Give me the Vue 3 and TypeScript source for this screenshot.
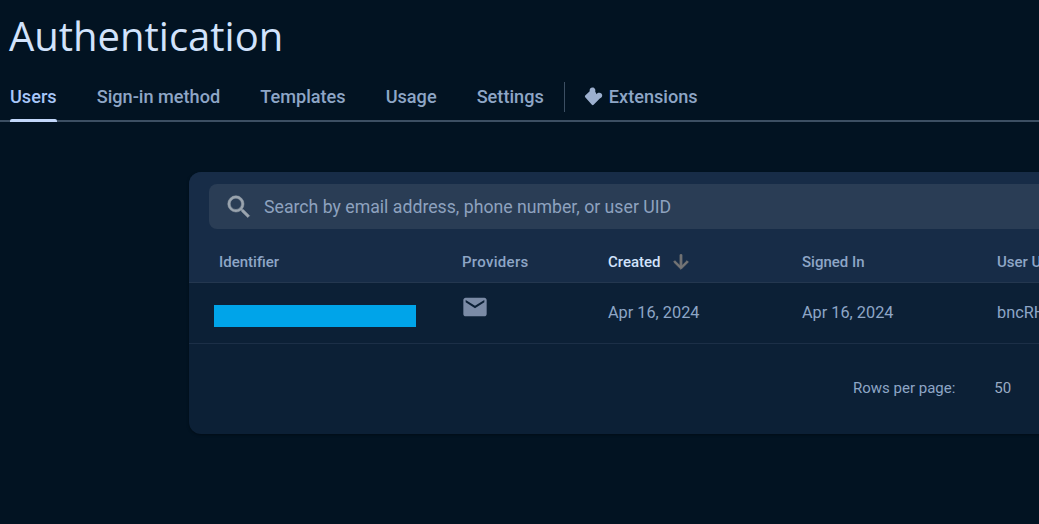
<script setup lang="ts">
const tabs: string[] = ['Users', 'Sign-in method', 'Templates', 'Usage', 'Settings']
</script>

<template>
  <div class="page">
    <h1 class="title">Authentication</h1>
    <nav class="tabs">
      <a v-for="(t, i) in tabs" :key="t" class="tab" :class="{ active: i === 0 }">{{ t }}</a>
      <span class="divider"></span>
      <a class="tab ext">
        <svg class="puzzle" width="20" height="20" viewBox="0 0 20 20">
          <path fill="#9db0cf" d="M1.200 9.600 5.700 5.200C5.200 3 6.600 1.400 8.500 1.400S11.900 3.200 11.200 5.400L12.600 8.200C13.600 6.600 16 6.300 17.400 7.600 18.900 9.200 18.400 11.800 15.800 12.600L9.600 18.800C9 19.300 8.400 19.300 7.900 18.800L1.200 11.300C.7 10.700.7 10.100 1.200 9.600Z"/>
        </svg>
        Extensions
      </a>
    </nav>

    <section class="card">
      <div class="card-head">
        <div class="search">
          <svg class="search-icon" width="30" height="30" viewBox="0 0 24 24">
            <path fill="#9aa4ae" stroke="#9aa4ae" stroke-width="0.4" d="M15.500 14h-.79l-.28-.27A6.470 6.470 0 0 0 16 9.500 6.500 6.500 0 1 0 9.500 16c1.610 0 3.090-.59 4.230-1.570l.27.28v.79l5 4.990L20.490 19l-4.990-5Zm-6 0C7.010 14 5 11.990 5 9.500S7.010 5 9.500 5 14 7.010 14 9.500 11.990 14 9.500 14Z"/>
          </svg>
          <span class="placeholder">Search by email address, phone number, or user UID</span>
        </div>
        <div class="grid head-row">
          <span>Identifier</span>
          <span class="providers">Providers</span>
          <span class="sorted">Created
            <svg class="arrow" width="22" height="22" viewBox="0 0 24 24">
              <path fill="#757575" stroke="#757575" stroke-width="1" d="M20 12l-1.410-1.410L13 16.170V4h-2v12.170l-5.580-5.590L4 12l8 8 8-8Z"/>
            </svg>
          </span>
          <span>Signed In</span>
          <span>User UID</span>
        </div>
      </div>

      <div class="grid body-row">
        <span class="redacted"></span>
        <svg class="mail" width="28" height="28" viewBox="0 0 24 24">
          <path fill="#7b8ba6" d="M20 4H4c-1.100 0-2 .9-2 2v12c0 1.100.9 2 2 2h16c1.100 0 2-.9 2-2V6c0-1.100-.9-2-2-2Zm0 4-8 5-8-5V6l8 5 8-5v2Z"/>
        </svg>
        <span class="cell">Apr 16, 2024</span>
        <span class="cell">Apr 16, 2024</span>
        <span class="cell">bncRHxQ2pLk8vTz</span>
      </div>

      <div class="pager">
        <span class="rows-label">Rows per page:</span>
        <span class="rows-value">50</span>
      </div>
    </section>
  </div>
</template>

<style>
html, body {
  margin: 0;
  background: #021322;
  overflow: hidden;
}
</style>

<style scoped>
.page {
  width: 1039px;
  height: 524px;
  overflow: hidden;
  background: #021322;
  font-family: Roboto, "Liberation Sans", sans-serif;
}
.title {
  margin: 0;
  padding: 11px 0 0 9px;
  height: 59px;
  box-sizing: content-box;
  font-family: "Open Sans", sans-serif;
  font-weight: 450;
  font-size: 40px;
  line-height: 50px;
  color: #d2e3fc;
}
.tabs {
  display: flex;
  align-items: stretch;
  gap: 40px;
  height: 52px;
  padding-left: 10px;
  border-bottom: 2px solid #3c4f63;
  box-sizing: border-box;
}
.tab {
  position: relative;
  display: flex;
  align-items: center;
  padding-top: 2px;
  font-size: 18.15px;
  font-weight: 500;
  color: #8ea6c6;
}
.tab.active {
  color: #a8c7fa;
}
.tab.active::after {
  content: "";
  position: absolute;
  left: 0;
  right: 0;
  bottom: -2px;
  height: 3px;
  border-radius: 2px 2px 0 0;
  background: #c2d7fa;
}
.divider {
  width: 1px;
  height: 30px;
  margin: 12px -20px 0 -20px;
  background: #3c4f63;
}
.ext {
  gap: 5px;
}
.puzzle {
  flex: none;
  margin-left: -1px;
}
.card {
  width: 1000px;
  height: 262px;
  margin: 50px 0 0 189px;
  border-radius: 12px;
  background: #0c2036;
  overflow: hidden;
  box-shadow: 0 1px 3px rgba(0, 0, 0, 0.35);
}
.card-head {
  background: #172c47;
  padding-top: 12px;
  border-bottom: 1px solid #24374f;
}
.search {
  display: flex;
  align-items: center;
  height: 45px;
  margin-left: 20px;
  padding-left: 15px;
  border-radius: 8px;
  background: #2a3d55;
}
.search-icon {
  flex: none;
}
.placeholder {
  margin-left: 10px;
  font-size: 17.7px;
  color: #8ea2bf;
}
.grid {
  display: grid;
  grid-template-columns: 243px 146px 194px 195px 1fr;
  padding-left: 30px;
}
.head-row {
  align-items: center;
  box-sizing: border-box;
  height: 53px;
  padding-top: 12px;
  font-size: 15px;
  font-weight: 500;
  color: #8ea6c6;
}
.providers {
  letter-spacing: 0.3px;
}
.sorted {
  display: flex;
  align-items: center;
  gap: 9px;
  color: #d2e3fc;
}
.body-row {
  position: relative;
  height: 60px;
  align-items: center;
  border-bottom: 1px solid #1c2f47;
}
.redacted {
  display: block;
  width: 202px;
  height: 22px;
  margin: 6px 0 0 -5px;
  background: #00a4e9;
}
.mail {
  margin: -12px 0 0 -1px;
}
.cell {
  margin-top: -2px;
  font-size: 16.3px;
  color: #8ea6c6;
  white-space: nowrap;
}
.pager {
  display: flex;
  align-items: center;
  height: 88px;
  padding-left: 664px;
  font-size: 15px;
  color: #8ea6c6;
}
.rows-value {
  margin-left: 39px;
  color: #9aabc4;
}
</style>
